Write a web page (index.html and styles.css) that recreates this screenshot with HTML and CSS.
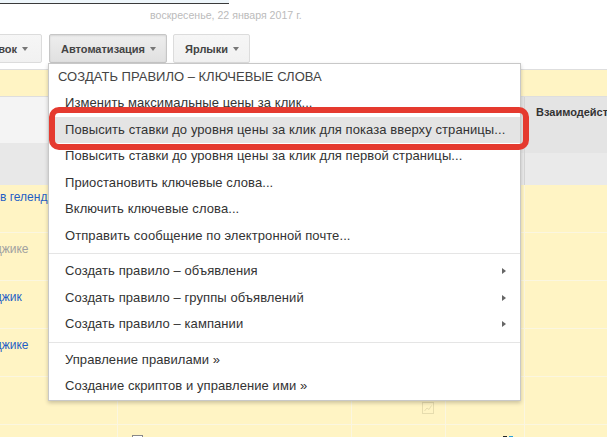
FILE: index.html
```html
<!DOCTYPE html>
<html lang="ru">
<head>
    <meta charset="UTF-8">
    <title>Автоматизация</title>
    <link rel="stylesheet" href="styles.css">
</head>
<body>

    <div class="search"></div>
    <div class="date">воскресенье, 22 января 2017 г.</div>

    <div class="toolbar">
        <div class="clip">
            <button class="btn wide">Стратегия ставок <span class="caret"></span></button>
        </div>
        <div class="dropdown">
            <button class="btn active">Автоматизация <span class="caret"></span></button>
            <div class="menu">
                <div class="menu-title">СОЗДАТЬ ПРАВИЛО – КЛЮЧЕВЫЕ СЛОВА</div>
                <div class="item">Изменить максимальные цены за клик...</div>
                <div class="item hover">Повысить ставки до уровня цены за клик для показа вверху страницы...</div>
                <div class="item">Повысить ставки до уровня цены за клик для первой страницы...</div>
                <div class="item">Приостановить ключевые слова...</div>
                <div class="item">Включить ключевые слова...</div>
                <div class="item">Отправить сообщение по электронной почте...</div>
                <div class="sep"></div>
                <div class="item sub">Создать правило – объявления</div>
                <div class="item sub">Создать правило – группы объявлений</div>
                <div class="item sub">Создать правило – кампании</div>
                <div class="sep"></div>
                <div class="item">Управление правилами »</div>
                <div class="item">Создание скриптов и управление ими »</div>
            </div>
        </div>
        <button class="btn">Ярлыки <span class="caret"></span></button>
    </div>

    <div class="grid">
        <div class="band"></div>

        <div class="row head">
            <div class="cell first"></div>
            <div class="cell"></div>
            <div class="cell"></div>
            <div class="cell"></div>
            <div class="cell title">Взаимодействия</div>
        </div>
        <div class="row total">
            <div class="cell"></div>
            <div class="cell"></div>
            <div class="cell"></div>
            <div class="cell"></div>
            <div class="cell"></div>
        </div>

        <div class="row data">
            <div class="cell"><a class="link top">в геленджике</a></div>
            <div class="cell"></div>
            <div class="cell"></div>
            <div class="cell"></div>
            <div class="cell"></div>
        </div>
        <div class="row data">
            <div class="cell"><a class="link cut muted">геленджике</a></div>
            <div class="cell"></div>
            <div class="cell"></div>
            <div class="cell"></div>
            <div class="cell"></div>
        </div>
        <div class="row data">
            <div class="cell"><a class="link cut">геленджик</a></div>
            <div class="cell"></div>
            <div class="cell"></div>
            <div class="cell"></div>
            <div class="cell"></div>
        </div>
        <div class="row data">
            <div class="cell"><a class="link cut">геленджике</a></div>
            <div class="cell"></div>
            <div class="cell"></div>
            <div class="cell"></div>
            <div class="cell"></div>
        </div>
        <div class="row data">
            <div class="cell"></div>
            <div class="cell"></div>
            <div class="cell chart">
                <svg width="12" height="12" viewBox="0 0 12 12">
                    <rect x="0.5" y="0.5" width="11" height="11" fill="none" stroke="#e6dcae"/>
                    <path d="M2.5 9 L5 6 L7 7.5 L9.5 3.5" fill="none" stroke="#e6dcae" stroke-width="1"/>
                </svg>
            </div>
            <div class="cell"></div>
            <div class="cell"></div>
        </div>
        <div class="row data">
            <div class="cell"></div>
            <div class="cell lead"><span class="check"></span><b>Б</b></div>
            <div class="cell"></div>
            <div class="cell icons"><span class="dot d1"></span><span class="dot d2"></span></div>
            <div class="cell"></div>
        </div>
    </div>

</body>
</html>
```

FILE: styles.css
```css
body {
    font-family: 'Liberation Sans', Arial, sans-serif;
    margin: 0;
    width: 607px;
    height: 437px;
    overflow: hidden;
    background: white;
    color: #333;
}

.search {
    width: 229px;
    height: 3px;
    background: #eef6fb;
    border-bottom: 1px solid #3a3a3a;
}

.date {
    margin: 4px 0 0 150px;
    font-size: 10.6px;
    line-height: 14px;
    color: #bbb;
}

.toolbar {
    display: flex;
    gap: 6px;
    margin-top: 12px;
    height: 29px;
}

.clip {
    width: 42px;
    margin-right: 1px;
    display: flex;
    justify-content: flex-end;
    overflow: hidden;
    flex-shrink: 0;
}

.btn {
    flex-shrink: 0;
    display: inline-flex;
    align-items: center;
    height: 29px;
    padding: 0 10px 0 11px;
    border: 1px solid #dcdcdc;
    border-radius: 2px;
    background: linear-gradient(#f6f6f6, #f1f1f1);
    font-family: 'Liberation Sans', Arial, sans-serif;
    font-size: 11px;
    font-weight: bold;
    color: #444;
    white-space: nowrap;
}

.btn.wide {
    padding-right: 13px;
}

.btn.active {
    background: linear-gradient(#eeeeee, #e0e0e0);
    border-color: #c6c6c6;
    box-shadow: inset 0 1px 2px rgba(0, 0, 0, 0.1);
}

.caret {
    margin-left: 5px;
    width: 0;
    height: 0;
    border-left: 3.5px solid transparent;
    border-right: 3.5px solid transparent;
    border-top: 4px solid #777;
}

.dropdown {
    position: relative;
    height: 29px;
}

.menu {
    position: absolute;
    top: 100%;
    left: -1px;
    width: 473px;
    box-sizing: border-box;
    background: white;
    border: 1px solid #c8c8c8;
    box-shadow: 0 2px 4px rgba(0, 0, 0, 0.2);
    z-index: 10;
    font-size: 13px;
}

.menu-title {
    height: 26px;
    line-height: 26px;
    padding-left: 9px;
    color: #444;
}

.item {
    position: relative;
    height: 26.5px;
    line-height: 26.5px;
    padding-left: 16px;
    color: #333;
    letter-spacing: 0.08px;
    white-space: nowrap;
}

.item.hover {
    background: #e4e4e4;
}

.item.hover::after {
    content: "";
    position: absolute;
    left: 0;
    right: -9px;
    top: -9.5px;
    bottom: -7px;
    border: 6px solid #e53a2f;
    border-radius: 10px;
}

.item.sub::after {
    content: "";
    position: absolute;
    right: 14px;
    top: 10px;
    border-top: 3.5px solid transparent;
    border-bottom: 3.5px solid transparent;
    border-left: 4px solid #666;
}

.sep {
    height: 1px;
    margin: 4px 0;
    background: #e5e5e5;
}

.grid {
    margin-top: 6px;
    width: 640px;
}

.band {
    height: 26px;
    background: #fff4c4;
    border-top: 1px solid #dedede;
    border-bottom: 1px solid #dedede;
}

.row {
    display: grid;
    grid-template-columns: 118px 234px 94px 79px 1fr;
}

.cell {
    box-sizing: border-box;
    border-right: 1px solid #d6d6d6;
}

.head {
    height: 56px;
    background: #e4e4e4;
}

.head .first {
    background: linear-gradient(#f4f4f4 46px, #e8e8e8 46px);
    height: 88px;
}

.head .title {
    padding: 9px 0 0 11px;
    font-size: 11px;
    font-weight: bold;
    line-height: 13px;
    color: #333;
    white-space: nowrap;
}

.total {
    height: 32px;
    background: #eaeaea;
}

.total .cell:first-child {
    background: #e8e8e8;
}

.data {
    height: 48px;
    background: #fff4c4;
}

.data .cell {
    border-right-color: #fbf6e0;
    border-bottom: 1px solid #fbf6e0;
}

.link {
    display: block;
    padding-top: 9px;
    font-size: 12px;
    line-height: 14px;
    color: #1f5fc6;
    white-space: nowrap;
}

.link.top {
    padding-top: 5px;
}

.link.cut {
    text-indent: -36px;
}

.link.muted {
    color: #a0a0a0;
}

.chart {
    display: flex;
    justify-content: flex-end;
    padding: 25px 11px 0 0;
}

.lead {
    display: flex;
    align-items: flex-start;
    gap: 8px;
    padding: 10px 0 0 14px;
    font-size: 12px;
}

.check {
    width: 9px;
    height: 9px;
    border: 1px solid #888;
    background: #fff;
}

.icons {
    display: flex;
    gap: 2px;
    padding: 11px 0 0 57px;
}

.dot {
    width: 4px;
    height: 6px;
}

.d1 {
    background: #222;
}

.d2 {
    background: #2a9fd6;
}
```
